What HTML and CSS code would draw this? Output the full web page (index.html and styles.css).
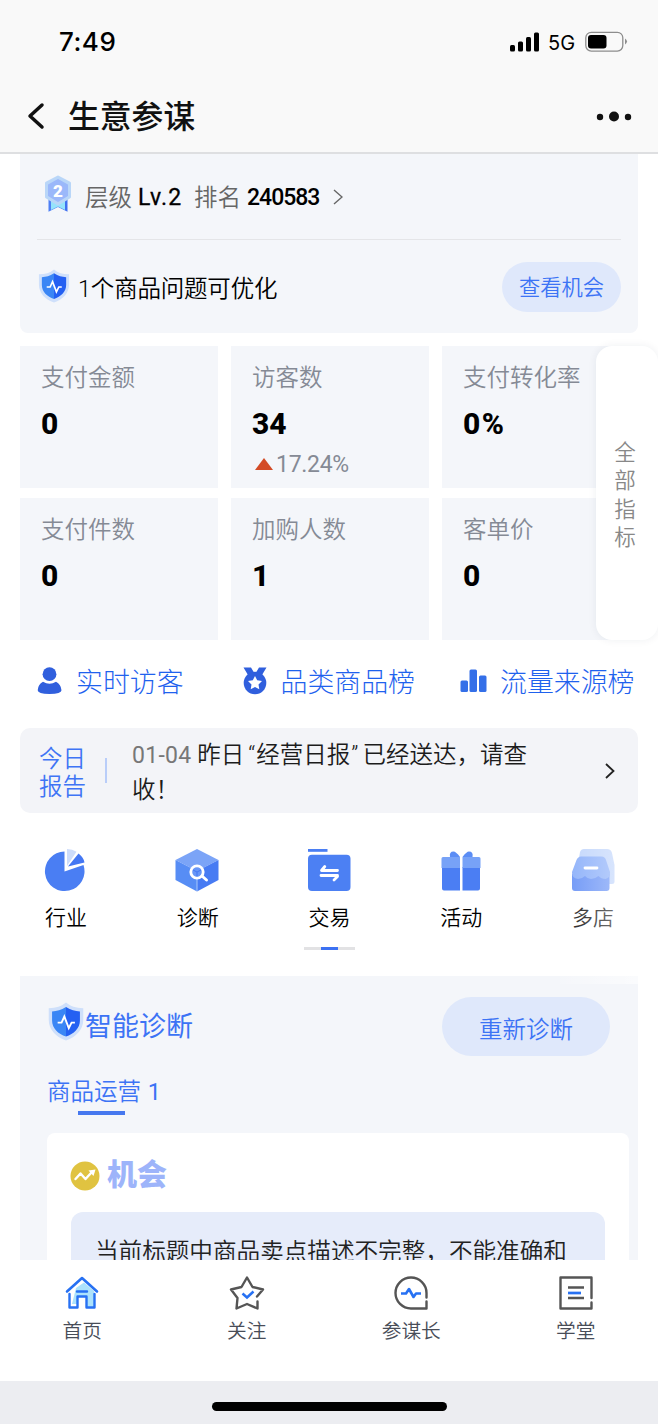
FILE: index.html
```html
<!DOCTYPE html>
<html lang="zh-CN">
<head>
<meta charset="utf-8">
<title>生意参谋</title>
<link rel="stylesheet" href="styles.css">
</head>
<body>
<svg class="defs" width="0" height="0" aria-hidden="true">
  <defs>
    <symbol id="shield" viewBox="0 0 32 35">
      <path d="M16 .5C20 4 25 5.500 31.500 5.500V16C31.500 25 25 31.500 16 34.500 7 31.500.5 25 .5 16V5.500C7 5.500 12 4 16 .5Z" fill="#cfe0fb"/>
      <path d="M16 4.500C11.500 7.300 8 8.300 3.500 8.500V16.500C3.500 23.500 9 28.500 16 31Z" fill="#3a86f5"/>
      <path d="M16 4.500C20.500 7.300 24 8.300 28.500 8.500V16.500C28.500 23.500 23 28.500 16 31Z" fill="#2460f2"/>
      <path d="M8.500 18.500H12L14.500 13 18.500 23.500 21 18.500H24" fill="none" stroke="#fff" stroke-width="1.700"/>
    </symbol>
  </defs>
</svg>
<header class="header">
  <div class="status">
    <span class="time">7:49</span>
    <svg class="signal" width="30" height="20" viewBox="0 0 30 20"><rect y="13" width="5" height="6.500" rx="1.500"/><rect x="8" y="9.500" width="5" height="10" rx="1.500"/><rect x="16" y="5" width="5" height="14.500" rx="1.500"/><rect x="24" y="0.500" width="5" height="19" rx="1.500"/></svg>
    <span class="net">5G</span>
    <svg class="battery" width="43" height="22" viewBox="0 0 43 22"><rect x=".8" y="1.300" width="37" height="18.800" rx="5.500" fill="none" stroke="#8d8d8d" stroke-width="1.300"/><rect x="3" y="4" width="18.500" height="13.500" rx="3"/><path d="M40 7.500q4 3 0 6Z" fill="#8d8d8d"/></svg>
  </div>
  <div class="nav">
    <svg width="18" height="28" viewBox="0 0 18 28"><path d="M15 3 3 14 15 25" fill="none" stroke="#111" stroke-width="3.500" stroke-linecap="round" stroke-linejoin="round"/></svg>
    <h1>生意参谋</h1>
    <svg class="more" width="36" height="12" viewBox="0 0 36 12" fill="#111"><circle cx="4" cy="7" r="3.200"/><circle cx="18" cy="6.500" r="5"/><circle cx="32" cy="7" r="3.200"/></svg>
  </div>
</header>

<main class="content">
  <section class="level">
    <div class="level-row">
      <svg class="medal" width="28" height="38" viewBox="0 0 28 38">
        <path d="M4.500 24H14V32L4.500 36.800Z" fill="#4f80f5"/><path d="M23.500 24H14V32L23.500 36.800Z" fill="#3f70f0"/>
        <path d="M7 26H21V35L14 31.500 7 35Z" fill="#95e3fb"/>
        <path d="M14 2 25.500 8V22L14 29 2.500 22V8Z" fill="#b9d6f8" stroke="#b9d6f8" stroke-width="3" stroke-linejoin="round"/>
        <path d="M14 5 23 10V20.500L14 26 5 20.500V10Z" fill="#9bb8fa" stroke="#9bb8fa" stroke-width="2" stroke-linejoin="round"/>
        <text x="14" y="21.500" text-anchor="middle" class="medal-num">2</text>
      </svg>
      <span class="key">层级</span><b class="lv">Lv.2</b><span class="key rank">排名</span><b class="num">240583</b>
      <svg class="go" width="10" height="16" viewBox="0 0 10 16"><path d="M1 1 9 8 1 15" fill="none" stroke="#666" stroke-width="1.400"/></svg>
    </div>
    <div class="level-row issue">
      <svg class="shield" width="32" height="34"><use href="#shield"/></svg>
      <span class="issue-text">1个商品问题可优化</span>
      <button class="pill small">查看机会</button>
    </div>
  </section>

  <section class="metrics">
    <div class="metric"><span>支付金额</span><b>0</b></div>
    <div class="metric"><span>访客数</span><b>34</b><em><svg width="18" height="12" viewBox="0 0 18 12"><path d="M9 0 18 12H0Z" fill="#d34b26"/></svg>17.24%</em></div>
    <div class="metric"><span>支付转化率</span><b class="wide">0%</b></div>
    <div class="metric"><span>支付件数</span><b>0</b></div>
    <div class="metric"><span>加购人数</span><b>1</b></div>
    <div class="metric"><span>客单价</span><b>0</b></div>
    <aside class="all">全<br>部<br>指<br>标</aside>
  </section>

  <nav class="links">
    <a class="link"><svg width="26" height="28" viewBox="0 0 26 28" fill="#305fdd"><circle cx="12.500" cy="7.200" r="6.900"/><path d="M6 14.800Q12.500 18.500 19 14.800 24 17.300 24.500 23.300 24.500 27 12.500 27 .7 27 .7 23.300 1 17.300 6 14.800Z"/></svg>实时访客</a>
    <a class="link second"><svg width="26" height="28" viewBox="0 0 26 28"><path d="M1.500.5H9L12 5.500 6 8ZM24.500.5H17L14 5.500 20 8Z" fill="#305fdd"/><circle cx="13" cy="16" r="11.300" fill="#305fdd"/><path d="m13 9 2.200 4.300 4.800.7-3.500 3.400.8 4.800L13 20l-4.300 2.200.8-4.800L6 14l4.800-.7Z" fill="#fff"/></svg>品类商品榜</a>
    <a class="link third"><svg width="27" height="28" viewBox="0 0 27 28" fill="#346fe8"><rect x=".5" y="13.500" width="7.500" height="11.500" rx="1.500"/><rect x="9.500" y="2.500" width="7.500" height="22.500" rx="1.500"/><rect x="19" y="8.500" width="7.500" height="16.500" rx="1.500"/></svg>流量来源榜</a>
  </nav>

  <section class="report">
    <div class="report-title">今日<br>报告</div>
    <i class="bar"></i>
    <p><span class="date">01-04</span> 昨日<span class="open">“</span>经营日报<span class="close">”</span>已经送达，请查收！</p>
    <svg width="10" height="16" viewBox="0 0 10 16"><path d="M1 1 8.500 8 1 15" fill="none" stroke="#222" stroke-width="1.800"/></svg>
  </section>

  <section class="menu">
    <div class="item"><svg width="44" height="44" viewBox="0 0 44 44"><path d="M21.500 3.500V23.500L40.500 17A19.800 19.800 0 1 1 21.500 3.500Z" fill="#4a7ef3"/><path d="M24 18V1Q29.500 1 33.500 3.800Z" fill="#cddcfa"/><path d="M25 18.500 35.500 5.500Q41 10 41.500 14.500Z" fill="#4477f3"/></svg>行业</div>
    <div class="item"><svg width="44" height="44" viewBox="0 0 44 44"><path d="M22 1 43.500 12 22 23 .5 12Z" fill="#7ba4f7"/><path d="M.5 12 22 23V43.500L.5 32Z" fill="#578df5"/><path d="M43.500 12 22 23V43.500L43.500 32Z" fill="#477bf3"/><path d="M22 31V43" stroke="#a9c8fb"/><circle cx="22" cy="24" r="6.200" fill="#6796f7" stroke="#fff" stroke-width="2.800"/><path d="m18 22 4 2 4-2M22 24V28.500" stroke="#4377f3" fill="none"/><path d="m27 28 4.500 4" stroke="#fff" stroke-width="3" stroke-linecap="round"/></svg>诊断</div>
    <div class="item"><svg width="44" height="44" viewBox="0 0 44 44"><rect x="1" y="1" width="19.500" height="2.800" fill="#4a7ef3"/><rect x="1" y="6.800" width="42.500" height="36.200" rx="4" fill="#4c80f3"/><path d="M30.500 22.500H14.500L17.800 18.500M14 27.500H30.500V28.500l-3.500 3.500" fill="none" stroke="#fff" stroke-width="2.800" stroke-linejoin="round" stroke-linecap="round"/></svg>交易</div>
    <div class="item"><svg width="44" height="44" viewBox="0 0 44 44"><path d="M3 19H21V42.500H5Q3 42.500 3 40.500ZM23.500 19H41V40.500Q41 42.500 39 42.500H23.500Z" fill="#4b7ef3"/><path d="M4 9H21V20H2.500V10.500Q2.500 9 4 9ZM23.500 9H40Q41.500 9 41.500 10.500V20H23.500Z" fill="#77a2f7"/><path d="M11 9Q10 3.500 14.500 3.500 17 3.500 21 9ZM33.500 9Q34.500 3.500 30 3.500 27.500 3.500 23.500 9Z" fill="#5b8df5"/></svg>活动</div>
    <div class="item"><svg width="44" height="44" viewBox="0 0 44 44"><path d="M13 1H36Q40 1 41 5L43.500 17V34Q43.500 36 41 36H32L8 10 9 4Q10 1 13 1Z" fill="#b9d0fb"/><path d="M1 26H38.500V40Q38.500 43 35.500 43H4Q1 43 1 40Z" fill="#5a88f5"/><path d="M5.500 12Q7 8.500 10 8.500H30.500Q34 8.500 35 12L39 24Q39.500 29.500 34.500 31 30 31 27.500 28 24 31 20 31 16.500 31 14 28 11 31 7 31 .5 30 1 24Z" fill="#7ea6f9"/><path d="M14 20H26" stroke="#fff" stroke-width="2.800" stroke-linecap="round"/></svg>多店</div>
    <div class="scroll"><i></i></div>
    <div class="fade"></div>
  </section>

  <section class="diag">
    <div class="diag-head">
      <svg width="36" height="39"><use href="#shield"/></svg>
      <h2>智能诊断</h2>
      <button class="pill">重新诊断</button>
    </div>
    <div class="tab">商品运营 <span>1</span></div>
    <div class="card">
      <div class="card-title"><svg width="30" height="30" viewBox="0 0 30 30"><circle cx="15" cy="15" r="14.500" fill="#e0c341"/><path d="m5.500 18 5-5.500 5 5.500 6-6.500" fill="none" stroke="#fff" stroke-width="2.400" stroke-linejoin="round" stroke-linecap="round"/><path d="m18.500 9.500 7-1-2 6.500Z" fill="#fff"/></svg><b>机会</b></div>
      <div class="tip">当前标题中商品卖点描述不完整，不能准确和</div>
    </div>
  </section>
</main>

<footer class="tabs">
  <div class="tabitem"><svg width="36" height="36" viewBox="0 0 36 36"><path d="M12 13 20 7.500 30 16V32H23V21H13V29H8Z" fill="#ace2fc"/><path d="m3 16.500 15-13.500L33 16.500" fill="none" stroke="#2771f3" stroke-width="2.600" stroke-linecap="round" stroke-linejoin="round"/><path d="M5.500 19V32.500H13.500V21.500H22.500V32.500H30.500V19M13 16.500H23" fill="none" stroke="#2771f3" stroke-width="2.400" stroke-linejoin="round" stroke-linecap="round"/></svg>首页</div>
  <div class="tabitem"><svg width="36" height="36" viewBox="0 0 36 36"><path d="M28.500 26.500V33.500L18 29 7.500 33.500 8.500 23 2 14.500 12.500 12 18 2.500 23.500 12 34 14.500 28 21.500" fill="none" stroke="#555" stroke-width="2.400" stroke-linejoin="round" stroke-linecap="round"/><path d="m13.500 18.500 4.500 4 6.500-6" fill="none" stroke="#2771f3" stroke-width="2.500"/></svg>关注</div>
  <div class="tabitem"><svg width="36" height="36" viewBox="0 0 36 36"><path d="M33.500 22.500V18A15.500 15.500 0 1 0 18 33.500H33.500V26.500" fill="none" stroke="#555" stroke-width="2.400" stroke-linecap="round" stroke-linejoin="round"/><path d="M8 18.500H13L16 14 20.500 22 23 18.500H28" fill="none" stroke="#2771f3" stroke-width="2.600" stroke-linejoin="round"/></svg>参谋长</div>
  <div class="tabitem"><svg width="36" height="36" viewBox="0 0 36 36"><path d="M33.500 23V2.500H2.500V33.500H33.500V27.500" fill="none" stroke="#555" stroke-width="2.400" stroke-linecap="round" stroke-linejoin="round"/><path d="M10 12.500H26M10 23H26" stroke="#555" stroke-width="2.500"/><path d="M10 18H23" stroke="#2771f3" stroke-width="2.700"/></svg>学堂</div>
</footer>
<div class="home"><i></i></div>
</body>
</html>
```

FILE: styles.css
```css
* { box-sizing: border-box; }
body {
  margin: 0;
  width: 658px;
  height: 1424px;
  overflow: hidden;
  display: flex;
  flex-direction: column;
  background: #fff;
  color: #111;
  font-family: Roboto, "Noto Sans CJK SC", sans-serif;
  font-weight: 350;
}
h1, h2, p { margin: 0; }
svg { flex: none; display: block; }
.defs { position: absolute; }
button { border: 0; padding: 0; font: inherit; }
i, em { font-style: normal; }

.header { height: 154px; flex: none; background: #f9f9f9; border-bottom: 2px solid #dedfe1; }
.status { height: 83px; padding: 0 30px 0 59px; display: flex; align-items: center; }
.time { font: 500 26px/32px Inter, sans-serif; letter-spacing: .5px; flex: 1; color: #000; padding-top: 1px; }
.signal { margin-right: 8px; }
.net { font: 400 20px/26px Inter, sans-serif; color: #000; width: 37px; letter-spacing: .2px; padding-top: 2px; }
.nav { height: 66px; padding: 0 26px 0 27px; display: flex; align-items: center; }
h1 { font-size: 31.800px; line-height: 40px; font-weight: 500; margin-left: 23px; flex: 1; padding-top: 2px; }

.content { height: 1106px; flex: none; overflow: hidden; padding: 0 20px; }
.level { height: 179px; background: #f4f6fa; border-radius: 0 0 8px 8px; padding: 0 17px; }
.level-row { height: 86px; display: flex; align-items: center; border-bottom: 1px solid #e4e5e8; font-size: 23.500px; line-height: 34px; color: #000; }
.medal { margin: -5px 13px 0 7px; }
.medal-num { font: 900 17px Roboto, sans-serif; fill: #fff; }
.key { color: #666; width: 53px; padding-top: 2px; }
.level-row b { font-weight: 500; font-size: 23px; padding-top: 2px; }
.level-row .lv { width: 56px; letter-spacing: 1.100px; font-weight: 400; -webkit-text-stroke: .3px #000; }
.num { width: 86px; letter-spacing: -1px; }
.issue { height: 93px; border: 0; }
.shield { margin-top: -2px; margin-left: 1px; }
.issue-text { margin-left: 8px; padding-top: 4px; flex: 1; letter-spacing: -.2px; }
.pill { width: 168px; height: 59px; border-radius: 30px; background: #dfe8fb; color: #3c73f5; font-size: 23.500px; line-height: 59px; padding-top: 4px; }
.pill.small { width: 119px; height: 50px; font-size: 21.300px; line-height: 48px; padding-top: 2px; }

.metrics { margin-top: 13px; position: relative; display: grid; grid-template-columns: repeat(3, 198px); grid-auto-rows: 142px; gap: 10px 13px; }
.metric { background: #f4f6fa; padding: 15px 21px 0; display: flex; flex-direction: column; }
.metric span { font-size: 23.500px; line-height: 34px; color: #858a95; }
.metric b { font-size: 30px; line-height: 36px; font-weight: 800; color: #000; margin-top: 11px; }
.metric .wide { letter-spacing: 1.500px; }
.metric em { display: flex; align-items: center; font-size: 23px; line-height: 30px; font-weight: 400; color: #858a95; margin-top: 8px; padding-left: 3px; gap: 3px; letter-spacing: -.3px; }
.metric em svg { margin-top: -3px; }
.all { position: absolute; left: 576px; top: 0; width: 62px; height: 294px; border-radius: 16px; background: #fff; box-shadow: 0 0 8px rgba(30, 40, 70, .07); display: flex; align-items: center; justify-content: center; text-align: center; color: #888; font-size: 21.500px; line-height: 28.300px; padding: 5px 4px 0 0; }

.links { height: 88px; display: flex; align-items: center; padding: 0 0 6px 17px; color: #1f62ee; font-size: 26.900px; line-height: 38px; font-weight: 300; }
.link { display: flex; align-items: center; gap: 13px; white-space: nowrap; padding-top: 4px; }
.link svg { margin-top: -5px; }
.second { margin-left: 58px; }
.third { margin-left: 45px; }

.report { height: 85px; border-radius: 10px; background: #f3f4f8; padding: 0 23px 0 19px; display: flex; align-items: center; font-size: 23.500px; }
.report-title { width: 66px; color: #3f74f5; line-height: 28px; padding-top: 4px; }
.bar { width: 2px; height: 25px; background: #b9cdf9; }
.report p { margin: 4px auto 0 25px; width: 405px; line-height: 35px; color: #1c1c1c; }
.date { font-weight: 400; color: #777; font-size: 23px; letter-spacing: .3px; }
.open { padding: 0 1px 0 4px; }
.close { padding: 0 4px 0 1px; }

.menu { height: 163px; position: relative; padding-top: 35px; display: grid; grid-template-columns: repeat(5, 131.800px); margin-left: -20px; align-content: start; }
.item { display: flex; flex-direction: column; align-items: center; font-size: 21px; line-height: 30px; gap: 11px; color: #000; }
.item svg { margin-left: -1px; }
.scroll { grid-column: 1 / -1; width: 51px; height: 3px; background: #e2e2e4; margin: 14px 0 0 304px; display: flex; justify-content: center; }
.scroll i { width: 17px; background: #3c71f2; }
.fade { position: absolute; left: 560px; top: 27px; width: 98px; height: 144px; background: linear-gradient(90deg, rgba(255,255,255,.1), rgba(255,255,255,.7)); }

.diag { height: 300px; background: #f4f6fa; padding: 21px 9px 0 27px; }
.diag-head { height: 59px; display: flex; align-items: center; padding-right: 19px; }
.diag-head svg { margin: -10px 1px 0 1px; }
h2 { font-size: 27px; line-height: 36px; font-weight: 400; color: #3c73f5; flex: 1; margin-top: 0; }
.tab { margin-top: 19px; height: 41px; color: #3c73f5; font-size: 23.500px; line-height: 34px; width: 120px; white-space: nowrap; }
.tab span { margin-left: 1px; font-weight: 400; }
.tab::after { content: ""; display: block; width: 47px; height: 4px; background: #4678ef; margin: 2px 0 0 31px; }
.card { background: #fff; border-radius: 8px; margin-top: 17px; padding: 23px 24px 0; height: 160px; }
.card-title { height: 38px; display: flex; align-items: center; gap: 7px; margin-left: -1px; }
.card-title svg { margin-top: 1px; }
.card-title b { font-size: 30px; line-height: 38px; font-weight: 900; color: #9db4fa; }
.tip { margin-top: 18px; height: 90px; border-radius: 12px; background: #e6ecfa; padding: 23px 24px; font-size: 23.600px; line-height: 34px; white-space: nowrap; color: #222; }

.tabs { height: 121px; flex: none; display: grid; grid-template-columns: repeat(4, 164.500px); padding-top: 15px; background: #fff; position: relative; }
.tabitem { display: flex; flex-direction: column; align-items: center; gap: 6px; font-size: 19.700px; line-height: 30px; color: #484d58; }
.home { height: 43px; flex: none; background: #ecedf1; display: flex; justify-content: center; padding-top: 21px; }
.home i { width: 235px; height: 9px; border-radius: 5px; background: #000; }
```
